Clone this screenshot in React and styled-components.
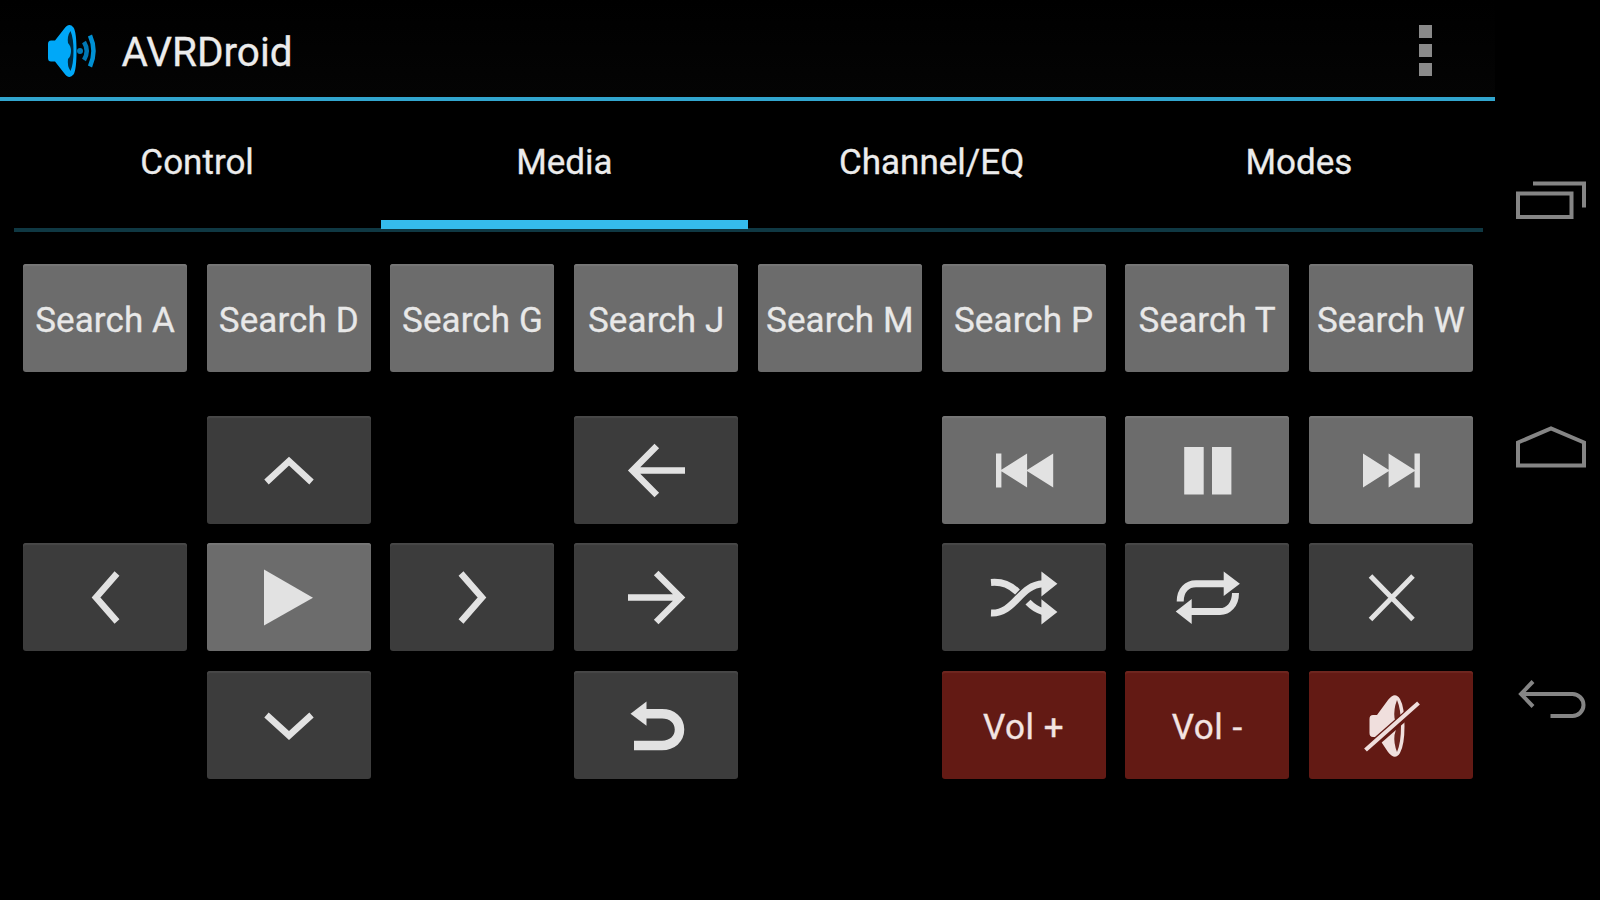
import React, { useState } from "react";
import styled, { createGlobalStyle } from "styled-components";

const GlobalStyle = createGlobalStyle`
  * {
    box-sizing: border-box;
  }

  body {
    margin: 0;
    background: #000;
    font-family: Roboto, "Noto Sans", sans-serif;
    overflow: hidden;
  }

  button {
    border: none;
    padding: 0;
    background: none;
    color: inherit;
    font-family: inherit;
    cursor: pointer;
  }
`;

const Screen = styled.div`
  display: flex;
  width: 1600px;
  height: 900px;
  background: #000;
  color: #ececec;
  -webkit-text-stroke: 0.3px currentColor;
`;

const AppArea = styled.div`
  display: flex;
  flex-direction: column;
  width: 1495px;
`;

const ActionBar = styled.header`
  display: flex;
  align-items: center;
  height: 101px;
  padding: 4px 55px 0 42px;
  background: linear-gradient(to bottom, #000, #040404);
  border-bottom: 4px solid #32a6cf;
`;

const Title = styled.h1`
  flex: 1;
  margin: 0 0 0 21.5px;
  padding-top: 2px;
  font-size: 40.5px;
  font-weight: 400;
  line-height: 48px;
`;

const OverflowButton = styled.button`
  display: flex;
  flex-direction: column;
  align-items: center;
  gap: 6px;
  width: 30px;
`;

const OverflowDot = styled.span`
  width: 13px;
  height: 12.7px;
  background: #8a8a8a;
`;

const TabBar = styled.nav`
  display: grid;
  grid-template-columns: repeat(4, 1fr);
  height: 131px;
  margin: 0 12.5px 0 13.5px;
  border-bottom: 4px solid #0f3843;
`;

const Tab = styled.button`
  height: 128px;
  padding-top: 4px;
  border-bottom: 9px solid ${(props) => (props.$active ? "#35bbec" : "transparent")};
  font-size: 35px;
`;

// Row 2 is an empty spacer between the search keys and the pad
const ButtonGrid = styled.main`
  display: grid;
  grid-template-columns: repeat(8, 164px);
  grid-template-rows: 108px 5px repeat(3, 108px);
  gap: 19.4px 19.7px;
  margin: 32px 0 0 23.1px;
`;

const tones = {
  light: { face: "#6c6c6c", edge: "#777777" },
  dark: { face: "#3c3c3c", edge: "#484848" },
  red: { face: "#631a14", edge: "#6f2720" },
};

const PadButton = styled.button`
  grid-column: ${(props) => props.$col};
  grid-row: ${(props) => props.$row};
  display: flex;
  align-items: center;
  justify-content: center;
  border-radius: 3px;
  background: ${(props) => tones[props.$tone].face};
  box-shadow: inset 0 2px 1px ${(props) => tones[props.$tone].edge};
  color: ${(props) => (props.$tone === "red" ? "#f3e4e2" : "#e8e8e8")};
  white-space: nowrap;
`;

const Label = styled.span`
  padding-top: 5px;
  font-size: 35px;
  letter-spacing: ${(props) => props.$spacing || 0}px;
`;

const Glyph = styled.svg`
  width: 72px;
  height: 72px;
  flex: none;
  overflow: visible;
  fill: none;
  stroke: #e2e2e2;
  stroke-width: ${(props) => props.$weight || 6.5};
`;

const Solid = styled.path`
  fill: #e2e2e2;
  stroke: none;
`;

const NavBar = styled.aside`
  display: flex;
  flex-direction: column;
  width: 105px;
  padding-top: 75px;
`;

const NavButton = styled.button`
  display: flex;
  align-items: center;
  justify-content: center;
  height: 248px;
`;

const NavGlyph = styled.svg`
  width: 100px;
  height: 60px;
  fill: none;
  stroke: #858585;
  stroke-width: 4;
`;

const Logo = () => (
  <svg width="58" height="58" viewBox="0 0 58 58" fill="none">
    <path d="M6 22Q6 18.500 9 18.500H13L22 7Q27 0 31.500 5.500Q34.500 10 34.500 29T31.500 52.500Q27 58 22 51L13 39.500H9Q6 39.500 6 36Z" fill="#00a8f8" />
    <path d="M28.500 9Q25 14 26 21Q29 24 29 29T26 37Q25 44 28.500 49Q31.500 42 31.500 29T28.500 9Z" fill="#00283d" />
    <circle cx="38" cy="29" r="3" fill="#0078b4" />
    <path d="M42 20Q47.500 29 42 38" stroke="#0078b4" strokeWidth="4.500" />
    <path d="M48 13.500Q55 29 48 44.500" stroke="#0090d4" strokeWidth="4.500" />
  </svg>
);

const icons = {
  up: (
    <Glyph viewBox="-36 -36 72 72">
      <path d="M-22.500 12L0 -8.800L22.500 12" />
    </Glyph>
  ),
  down: (
    <Glyph viewBox="-36 -36 72 72">
      <path d="M-22.500 -10L0 10.500L22.500 -10" />
    </Glyph>
  ),
  left: (
    <Glyph viewBox="-36 -36 72 72">
      <path d="M12 -23.500L-9 0.500L12 24.500" />
    </Glyph>
  ),
  right: (
    <Glyph viewBox="-36 -36 72 72">
      <path d="M-11 -23.500L10 0.500L-11 24.500" />
    </Glyph>
  ),
  arrowLeft: (
    <Glyph viewBox="-36 -36 72 72">
      <path d="M0.800 -24L-23.500 0.500L0.800 25M-23 0.500H29" />
    </Glyph>
  ),
  arrowRight: (
    <Glyph viewBox="-36 -36 72 72">
      <path d="M0.200 -24L24.700 0.500L0.200 25M24 0.500H-28" />
    </Glyph>
  ),
  undo: (
    <Glyph viewBox="-36 -36 72 72" $weight={9.5}>
      <path d="M-12 -11.200H6C16 -11.200 23.500 -5 23.500 4.600S16 20.400 6 20.400H-22" />
      <Solid d="M-25.500 -11.300L-9.500 -23.600V0.800Z" />
    </Glyph>
  ),
  play: (
    <Glyph viewBox="-36 -36 72 72">
      <Solid d="M-25 -27.500L24 0.700L-25 28.500Z" />
    </Glyph>
  ),
  previous: (
    <Glyph viewBox="-36 -36 72 72">
      <Solid d="M-28 -16.500H-22.600V17.500H-28ZM-23.800 0.500L3.100 -16.500V17.500ZM2.200 0.500L29.200 -16.500V17.500Z" />
    </Glyph>
  ),
  pause: (
    <Glyph viewBox="-36 -36 72 72">
      <Solid d="M-22.800 -23H-3.300V24.500H-22.800ZM5 -23H24.400V24.500H5Z" />
    </Glyph>
  ),
  next: (
    <Glyph viewBox="-36 -36 72 72">
      <Solid d="M28.900 -16.500H23.500V17.500H28.900ZM24.500 0.500L-2.400 -16.500V17.500ZM-1.300 0.500L-28 -16.500V17.500Z" />
    </Glyph>
  ),
  shuffle: (
    <Glyph viewBox="-36 -36 72 72" $weight={7}>
      <path d="M-33 16C-9 17 -5 -12 19 -13.300" />
      <path d="M-33 -14.600C-21 -15.500 -14 -12 -6.500 -5" />
      <path d="M4 5.200Q11 12.500 19 14.500" />
      <Solid d="M17.400 -25.600L33.400 -13.300L17.400 -0.600ZM17.400 2.200L33.400 14.900L17.400 27.500Z" />
    </Glyph>
  ),
  repeat: (
    <Glyph viewBox="-36 -36 72 72" $weight={7}>
      <path d="M-26.800 4.500C-26.800 -7 -20 -13.300 -11 -13.300H18" />
      <path d="M28.500 -4C28.500 8 21 14.500 13 14.500H-16" />
      <Solid d="M16.700 -25.600L32.900 -13.300L16.700 -1ZM-15.300 2L-31.300 14.500L-15.300 27Z" />
    </Glyph>
  ),
  close: (
    <Glyph viewBox="-36 -36 72 72" $weight={5}>
      <path d="M-20.500 -21L22 22.500M22 -21L-20.500 22.500" />
    </Glyph>
  ),
  mute: (
    <Glyph viewBox="-36 -36 72 72">
      <path
        d="M-21.500 -6Q-21.500 -10 -18 -10H-14L-3 -25Q4 -34 9 -26Q13.500 -18 13.500 1T9 28Q4 36 -3 27L-13 12H-18Q-21.500 12 -21.500 8Z"
        fill="#f0dfdd"
        stroke="none"
      />
      <path d="M6 -25Q2.500 -16 3.500 -7Q6.500 1 3.500 10Q2.500 18 6 27Q10 18 10 1T6 -25Z" fill="#6c241e" stroke="none" />
      <path d="M-25.500 26L27.500 -20.500" stroke="#631a14" strokeWidth="8.500" />
      <path d="M-25.500 25L27.500 -22" stroke="#f0dfdd" strokeWidth="4.200" />
    </Glyph>
  ),
};

const searchKeys = ["A", "D", "G", "J", "M", "P", "T", "W"];

const pad = [
  { name: "up", col: 2, row: 3, tone: "dark" },
  { name: "arrowLeft", col: 4, row: 3, tone: "dark" },
  { name: "previous", col: 6, row: 3, tone: "light" },
  { name: "pause", col: 7, row: 3, tone: "light" },
  { name: "next", col: 8, row: 3, tone: "light" },
  { name: "left", col: 1, row: 4, tone: "dark" },
  { name: "play", col: 2, row: 4, tone: "light" },
  { name: "right", col: 3, row: 4, tone: "dark" },
  { name: "arrowRight", col: 4, row: 4, tone: "dark" },
  { name: "shuffle", col: 6, row: 4, tone: "dark" },
  { name: "repeat", col: 7, row: 4, tone: "dark" },
  { name: "close", col: 8, row: 4, tone: "dark" },
  { name: "down", col: 2, row: 5, tone: "dark" },
  { name: "undo", col: 4, row: 5, tone: "dark" },
  { name: "volUp", label: "Vol +", col: 6, row: 5, tone: "red" },
  { name: "volDown", label: "Vol -", col: 7, row: 5, tone: "red" },
  { name: "mute", col: 8, row: 5, tone: "red" },
];

const tabs = ["Control", "Media", "Channel/EQ", "Modes"];

const App = () => {
  const [activeTab, setActiveTab] = useState("Media");

  return (
    <Screen>
      <GlobalStyle />
      <AppArea>
        <ActionBar>
          <Logo />
          <Title>AVRDroid</Title>
          <OverflowButton>
            <OverflowDot />
            <OverflowDot />
            <OverflowDot />
          </OverflowButton>
        </ActionBar>
        <TabBar>
          {tabs.map((tab) => (
            <Tab key={tab} $active={tab === activeTab} onClick={() => setActiveTab(tab)}>
              {tab}
            </Tab>
          ))}
        </TabBar>
        <ButtonGrid>
          {searchKeys.map((key, index) => (
            <PadButton key={key} $col={index + 1} $row={1} $tone="light">
              <Label $spacing={0.1}>Search {key}</Label>
            </PadButton>
          ))}
          {pad.map(({ name, label, col, row, tone }) => (
            <PadButton key={name} $col={col} $row={row} $tone={tone}>
              {label ? <Label $spacing={0.5}>{label}</Label> : icons[name]}
            </PadButton>
          ))}
        </ButtonGrid>
      </AppArea>
      <NavBar>
        <NavButton>
          <NavGlyph viewBox="0 0 100 60">
            <path d="M20 24.500H73.500V48H20ZM35 14.500H86V38.500" />
          </NavGlyph>
        </NavButton>
        <NavButton>
          <NavGlyph viewBox="0 0 100 60">
            <path d="M20 48.500V25.500L53 11.500L86 25.500V48.500Z" />
          </NavGlyph>
        </NavButton>
        <NavButton>
          <NavGlyph viewBox="0 0 100 60">
            <path d="M23 29H74.500A11 11 0 0 1 74.500 51H52.500" />
            <path d="M35 16.500L23 29L35 41.500" />
          </NavGlyph>
        </NavButton>
      </NavBar>
    </Screen>
  );
};

export default App;
